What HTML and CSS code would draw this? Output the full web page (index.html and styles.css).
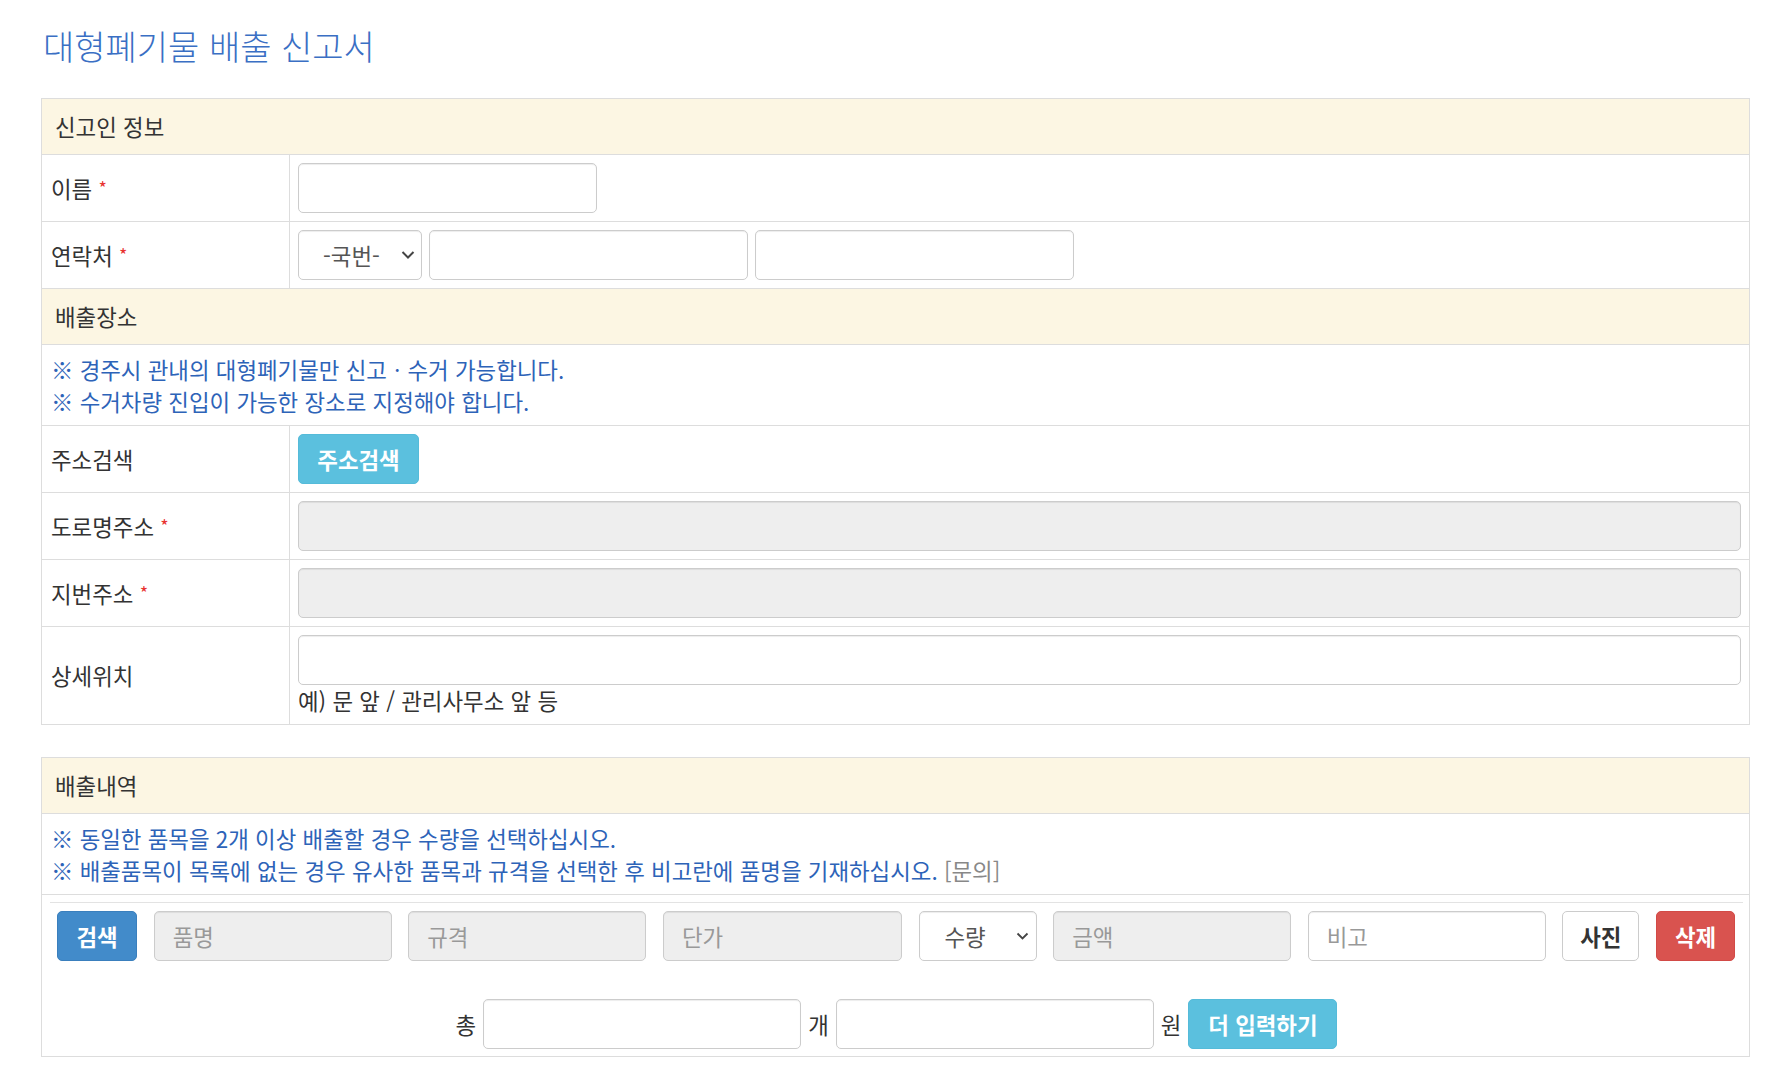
FILE: index.html
```html
<!DOCTYPE html>
<html lang="ko">
<head>
  <meta charset="UTF-8" />
  <meta name="viewport" content="width=device-width, initial-scale=1.0"/>
  <title>대형폐기물 배출 신고서</title>
  <link rel="stylesheet" href="styles.css">
</head>
<body>
  <div class="wrap">
    <h1 class="page-title">대형폐기물 배출 신고서</h1>

    <table class="form-table">
      <tr>
        <td class="section" colspan="2">신고인 정보</td>
      </tr>
      <tr>
        <th>이름 <span class="req">*</span></th>
        <td><input type="text" class="field name-field"></td>
      </tr>
      <tr>
        <th>연락처 <span class="req">*</span></th>
        <td>
          <div class="inline">
            <div class="select-box tel-select">
              <select><option>-국번-</option></select>
              <svg class="chev" width="14" height="9" viewBox="0 0 14 9"><path d="M1.5 1.5l5.5 5.5 5.5-5.5" fill="none" stroke="#444" stroke-width="2"/></svg>
            </div>
            <input type="text" class="field tel-field">
            <input type="text" class="field tel-field">
          </div>
        </td>
      </tr>
      <tr>
        <td class="section" colspan="2">배출장소</td>
      </tr>
      <tr>
        <td class="notes" colspan="2">
          ※ 경주시 관내의 대형폐기물만 신고ㆍ수거 가능합니다.<br>
          ※ 수거차량 진입이 가능한 장소로 지정해야 합니다.
        </td>
      </tr>
      <tr>
        <th>주소검색</th>
        <td><button class="btn btn-info">주소검색</button></td>
      </tr>
      <tr>
        <th>도로명주소 <span class="req">*</span></th>
        <td><input type="text" class="field full" readonly></td>
      </tr>
      <tr>
        <th>지번주소 <span class="req">*</span></th>
        <td><input type="text" class="field full" readonly></td>
      </tr>
      <tr>
        <th>상세위치</th>
        <td>
          <input type="text" class="field full">
          <p class="help">예) 문 앞 / 관리사무소 앞 등</p>
        </td>
      </tr>
    </table>

    <div class="panel">
      <div class="section">배출내역</div>
      <div class="notes boxed">
        ※ 동일한 품목을 2개 이상 배출할 경우 수량을 선택하십시오.<br>
        ※ 배출품목이 목록에 없는 경우 유사한 품목과 규격을 선택한 후 비고란에 품명을 기재하십시오. <span class="ask">[문의]</span>
      </div>
      <div class="panel-body">
        <hr>
        <div class="item-row">
          <button class="btn btn-primary">검색</button>
          <input type="text" class="field" placeholder="품명" readonly>
          <input type="text" class="field" placeholder="규격" readonly>
          <input type="text" class="field" placeholder="단가" readonly>
          <div class="select-box qty-select">
            <select><option>수량</option></select>
            <svg class="chev" width="13" height="8" viewBox="0 0 13 8"><path d="M1.5 1.5l5 5 5-5" fill="none" stroke="#444" stroke-width="1.8"/></svg>
          </div>
          <input type="text" class="field" placeholder="금액" readonly>
          <input type="text" class="field" placeholder="비고">
          <button class="btn btn-default">사진</button>
          <button class="btn btn-danger">삭제</button>
        </div>
        <div class="total-row">
          <span class="unit">총</span>
          <input type="text" class="field total-field">
          <span class="unit">개</span>
          <input type="text" class="field total-field">
          <span class="unit">원</span>
          <button class="btn btn-info more">더 입력하기</button>
        </div>
      </div>
    </div>
  </div>
</body>
</html>
```

FILE: styles.css
```css
body {
  margin: 0;
  padding: 0;
  background-color: #fff;
  font-family: "Noto Sans CJK KR", "Noto Sans", sans-serif;
  font-size: 22.4px;
  color: #333;
}
.wrap {
  width: 1709px;
  margin-left: 41px;
}
.page-title {
  margin: 25px 0 32px 2px;
  font-size: 34px;
  line-height: 41px;
  font-weight: 300;
  color: #3a6fc4;
}
.form-table {
  width: 100%;
  border-collapse: collapse;
  border: 1px solid #ddd;
}
.form-table th,
.form-table td {
  border: 1px solid #ddd;
  padding: 8px;
  vertical-align: middle;
  text-align: left;
}
.form-table th {
  width: 230px;
  padding: 8px 8px 8px 9px;
  font-weight: 400;
  line-height: 31px;
}
.section {
  background-color: #fcf6e3;
  padding: 12px 13px !important;
  line-height: 31px;
  color: #333;
}
.req {
  color: #e8312f;
  font-size: 18px;
  vertical-align: 3px;
}
.notes {
  padding: 8px 9px !important;
  line-height: 32px;
  color: #2d63b8;
}
.notes .ask {
  color: #888;
}
.field {
  box-sizing: border-box;
  height: 50px;
  padding: 0 18px;
  border: 1px solid #ccc;
  border-radius: 5px;
  background-color: #fff;
  box-shadow: inset 0 1px 1px rgba(0, 0, 0, 0.075);
  font-family: inherit;
  font-size: 22.4px;
  color: #555;
  display: block;
}
.field::placeholder {
  color: #999;
}
.field[readonly] {
  background-color: #eee;
}
.name-field {
  width: 299px;
}
.full {
  width: 100%;
}
.inline {
  display: flex;
  gap: 7px;
}
.tel-field {
  width: 319px;
}
.select-box {
  position: relative;
}
.select-box select {
  box-sizing: border-box;
  width: 100%;
  height: 50px;
  appearance: none;
  -webkit-appearance: none;
  border: 1px solid #ccc;
  border-radius: 5px;
  background-color: #fff;
  box-shadow: inset 0 1px 1px rgba(0, 0, 0, 0.075);
  font-family: inherit;
  font-size: 22.4px;
  color: #555;
  padding: 0 0 0 24px;
}
.select-box .chev {
  position: absolute;
  top: 50%;
  transform: translateY(-50%);
  pointer-events: none;
}
.tel-select {
  width: 124px;
}
.tel-select .chev {
  right: 7px;
}
.qty-select select {
  padding-left: 25px;
}
.qty-select .chev {
  right: 8px;
}
.btn {
  box-sizing: border-box;
  height: 50px;
  padding: 0 16px;
  border: 1px solid transparent;
  border-radius: 5px;
  font-family: inherit;
  font-size: 22.4px;
  font-weight: 700;
  color: #fff;
  cursor: pointer;
}
.btn-info {
  background-color: #5bc0de;
  border-color: #55bbd9;
  width: 121px;
}
.btn-primary {
  background-color: #428bca;
  border-color: #3a7fbd;
}
.btn-danger {
  background-color: #d9534f;
  border-color: #d24a46;
}
.btn-default {
  background-color: #fff;
  border-color: #ccc;
  color: #333;
}
.help {
  margin: 0;
  line-height: 31px;
  color: #333;
}
.panel {
  margin-top: 32px;
  border: 1px solid #ddd;
}
.panel .section {
  border-bottom: 1px solid #ddd;
}
.boxed {
  border-bottom: 1px solid #ddd;
}
.panel-body {
  padding: 7px 6px 7px 8px;
}
.panel-body hr {
  margin: 0 0 8px;
  border: 0;
  border-top: 1px solid #e3e3e3;
}
.item-row {
  display: grid;
  grid-template-columns: 80px 238px 238px 239px 118px 238px 238px 77px 79px;
  justify-content: space-between;
  margin: 0 8px 0 7px;
}
.item-row .field {
  width: 100%;
}
.item-row .btn {
  padding: 0;
}
.total-row {
  display: flex;
  justify-content: center;
  align-items: center;
  margin-top: 38px;
}
.unit {
  margin: 0 7px;
  color: #333;
}
.unit:first-child {
  margin-left: 0;
}
.total-field {
  width: 318px;
}
.more {
  width: 149px;
}
```
